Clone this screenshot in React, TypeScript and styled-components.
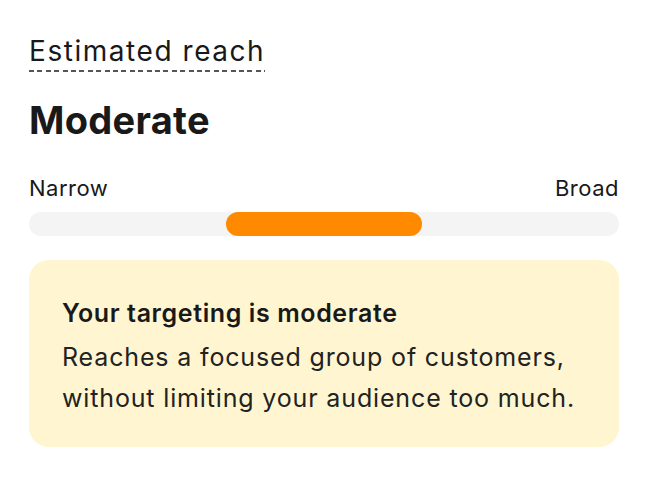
import React from "react";
import styled, { createGlobalStyle } from "styled-components";

const Global = createGlobalStyle`
  html, body { margin: 0; padding: 0; background: #ffffff; }
  body { font-family: Inter, "Noto Sans", sans-serif; color: #191919; }
`;

const Page = styled.div`
  width: 590px;
  padding: 34px 0 0 29px;
  display: flex;
  flex-direction: column;
`;

const Label = styled.span`
  align-self: flex-start;
  font-size: 28px;
  font-weight: 400;
  letter-spacing: 1.55px;
  line-height: 34px;
  padding-bottom: 4px;
  background-image: repeating-linear-gradient(
    to right,
    #555555 0 5px,
    transparent 5px 8.4px
  );
  background-size: 100% 2px;
  background-position: left bottom;
  background-repeat: no-repeat;
`;

const Level = styled.h1`
  margin: 26px 0 0;
  font-size: 38px;
  font-weight: 700;
  letter-spacing: 0.3px;
  line-height: 44px;
`;

const Ends = styled.div`
  margin-top: 33px;
  display: flex;
  justify-content: space-between;
  font-size: 22px;
  letter-spacing: 0.5px;
  line-height: 26px;
`;

const Track = styled.div`
  margin-top: 11px;
  height: 24px;
  border-radius: 12px;
  background: #f4f4f4;
  position: relative;
`;

const Fill = styled.div`
  position: absolute;
  top: 0;
  height: 100%;
  border-radius: 12px;
  background: #ff8a00;
`;

const Card = styled.div`
  margin-top: 24px;
  background: #fff5d1;
  border-radius: 20px;
  padding: 38px 33px 28px;
  display: flex;
  flex-direction: column;
`;

const CardTitle = styled.div`
  font-size: 25px;
  font-weight: 600;
  letter-spacing: 0.6px;
  line-height: 30px;
`;

const CardBody = styled.div`
  margin-top: 9px;
  font-size: 25px;
  letter-spacing: 0.85px;
  line-height: 41px;
  color: #222;
`;

export default function App() {
  const start = (226 - 29) / 590;
  const width = (422 - 226) / 590;
  return (
    <>
      <Global />
      <Page>
        <Label>Estimated reach</Label>
        <Level>Moderate</Level>
        <Ends>
          <span>Narrow</span>
          <span>Broad</span>
        </Ends>
        <Track>
          <Fill style={{ left: `${start * 100}%`, width: `${width * 100}%` }} />
        </Track>
        <Card>
          <CardTitle>Your targeting is moderate</CardTitle>
          <CardBody>
            Reaches a focused group of customers,
            <br />
            without limiting your audience too much.
          </CardBody>
        </Card>
      </Page>
    </>
  );
}
